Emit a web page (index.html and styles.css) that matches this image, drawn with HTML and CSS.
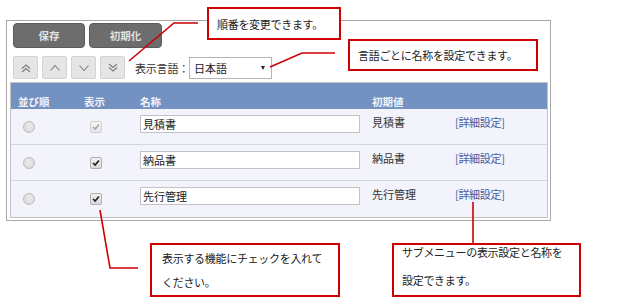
FILE: index.html
```html
<!DOCTYPE html>
<html lang="ja">
<head>
<meta charset="utf-8">
<title>メニュー設定</title>
<link rel="stylesheet" href="styles.css">
</head>
<body>
<div class="stage">
  <section class="panel">
    <div class="toolbar">
      <button class="btn-dark btn-save">保存</button>
      <button class="btn-dark btn-reset">初期化</button>
    </div>
    <div class="toolbar2">
      <div class="arrows">
        <button class="btn-arrow" aria-label="一番上へ"><svg viewBox="0 0 12 12" width="12" height="12"><polyline points="2,6.5 6,3 10,6.5"/><polyline points="2,10 6,6.5 10,10"/></svg></button>
        <button class="btn-arrow" aria-label="上へ"><svg viewBox="0 0 12 12" width="12" height="12"><polyline points="1.5,8.5 6,3.5 10.5,8.5"/></svg></button>
        <button class="btn-arrow" aria-label="下へ"><svg viewBox="0 0 12 12" width="12" height="12"><polyline points="1.5,3.5 6,8.5 10.5,3.5"/></svg></button>
        <button class="btn-arrow" aria-label="一番下へ"><svg viewBox="0 0 12 12" width="12" height="12"><polyline points="2,2 6,5.5 10,2"/><polyline points="2,5.5 6,9 10,5.5"/></svg></button>
      </div>
      <span class="lang-label">表示言語：</span>
      <div class="select"><span>日本語</span><span class="caret" aria-hidden="true"></span></div>
    </div>
    <div class="table">
      <div class="row head">
        <div class="cell">並び順</div>
        <div class="cell">表示</div>
        <div class="cell">名称</div>
        <div class="cell">初期値</div>
        <div class="cell"></div>
      </div>
      <div class="row">
        <div class="cell c-radio"><span class="radio"></span></div>
        <div class="cell c-chk"><span class="chk disabled"><svg viewBox="0 0 12 12" width="10" height="10"><polyline points="2.5,6 5,8.5 9.5,3"/></svg></span></div>
        <div class="cell"><input class="name" type="text" value="見積書"></div>
        <div class="cell text">見積書</div>
        <div class="cell text"><span class="link">[詳細設定]</span></div>
      </div>
      <div class="row">
        <div class="cell c-radio"><span class="radio"></span></div>
        <div class="cell c-chk"><span class="chk"><svg viewBox="0 0 12 12" width="10" height="10"><polyline points="2.5,6 5,8.5 9.5,3"/></svg></span></div>
        <div class="cell"><input class="name" type="text" value="納品書"></div>
        <div class="cell text">納品書</div>
        <div class="cell text"><span class="link">[詳細設定]</span></div>
      </div>
      <div class="row last">
        <div class="cell c-radio"><span class="radio"></span></div>
        <div class="cell c-chk"><span class="chk"><svg viewBox="0 0 12 12" width="10" height="10"><polyline points="2.5,6 5,8.5 9.5,3"/></svg></span></div>
        <div class="cell"><input class="name" type="text" value="先行管理"></div>
        <div class="cell text">先行管理</div>
        <div class="cell text"><span class="link">[詳細設定]</span></div>
      </div>
    </div>
  </section>

  <svg class="leaders" width="640" height="307" viewBox="0 0 640 307">
    <polyline points="129,61 174,23 198,23"/>
    <polyline points="270,67 302,53 335,53"/>
    <polyline points="100,210 110,268 138,268"/>
    <polyline points="473,202 473,243"/>
  </svg>

  <div class="note note-order">順番を変更できます。</div>
  <div class="note note-lang">言語ごとに名称を設定できます。</div>
  <div class="note note-check"><span class="ln">表示する機能にチェックを入れて</span><span class="ln">ください。</span></div>
  <div class="note note-sub"><span class="ln">サブメニューの表示設定と名称を</span><span class="ln">設定できます。</span></div>
</div>
</body>
</html>
```

FILE: styles.css
```css
* { box-sizing: border-box; }
html, body { margin: 0; padding: 0; background: #fff; }
body {
  font-family: "Noto Sans CJK JP", "Noto Sans", sans-serif;
  font-size: 11px;
  color: #222;
}
.stage {
  position: relative;
  width: 640px;
  height: 307px;
  overflow: hidden;
  padding-top: 20px;
  padding-left: 6px;
}
.panel {
  width: 545px;
  height: 201px;
  border: 1px solid #a8a8a8;
  padding: 2px 2px 2px 3px;
  display: flex;
  flex-direction: column;
}
.toolbar {
  display: flex;
  gap: 4px;
  padding-left: 3px;
  height: 25px;
}
.btn-dark {
  height: 25px;
  border: 1px solid #5c5c5c;
  border-radius: 4px;
  background: #6d6d6d;
  color: #e2e2e2;
  font: bold 10.5px "Noto Sans CJK JP", sans-serif;
  padding: 0;
  line-height: 23px;
}
.btn-save { width: 72px; }
.btn-reset { width: 73px; }
.toolbar2 {
  display: flex;
  align-items: center;
  margin-top: 8px;
  height: 23px;
  padding-left: 3px;
}
.arrows { display: flex; gap: 4px; }
.btn-arrow {
  width: 25px;
  height: 23px;
  padding: 0;
  border: 1px solid #d3d3d3;
  border-radius: 2px;
  background: #e5e5e5;
  display: flex;
  align-items: center;
  justify-content: center;
}
.btn-arrow svg polyline {
  fill: none;
  stroke: #7d7d7d;
  stroke-width: 1.1;
}
.lang-label {
  margin-left: 10px;
  font-size: 11px;
  color: #333;
  letter-spacing: -0.2px;
}
.select {
  width: 83px;
  height: 22px;
  border: 1px solid #b4b4b4;
  background: #fff;
  display: flex;
  align-items: center;
  justify-content: space-between;
  padding: 0 6px 0 4px;
  font-size: 11px;
  color: #222;
}
.caret {
  width: 0;
  height: 0;
  border-left: 2.5px solid transparent;
  border-right: 2.5px solid transparent;
  border-top: 4px solid #222;
}
.table {
  margin-top: 3px;
  width: 538px;
  border: 1px solid #c2c2c2;
  background: #f2f3fb;
}
.row {
  display: grid;
  grid-template-columns: 66px 56px 232px 83px 99px;
  height: 36px;
  border-bottom: 1px solid #d4d6df;
}
.row.last { border-bottom: none; }
.row.head {
  height: 26px;
  background: #7391c1;
  border-bottom: none;
}
.head .cell {
  padding-left: 7px;
  line-height: 26px;
  color: #f2f4fa;
  font-weight: bold;
  font-size: 10.5px;
}
.cell { padding-left: 7px; padding-top: 6px; }
.cell.text { line-height: 14px; font-size: 11px; color: #333; }
.c-radio { padding-left: 12px; padding-top: 12px; }
.c-chk { padding-left: 13px; padding-top: 12px; }
.radio {
  display: block;
  width: 12px;
  height: 12px;
  border-radius: 50%;
  border: 1px solid #bcbcbc;
  background: radial-gradient(circle at 50% 40%, #ececec, #d6d6d6);
}
.chk {
  display: flex;
  align-items: center;
  justify-content: center;
  width: 12px;
  height: 12px;
  border: 1px solid #b0b0b0;
  border-radius: 2px;
  background: linear-gradient(#f2f2f2, #d9d9d9);
}
.chk svg polyline {
  fill: none;
  stroke: #222;
  stroke-width: 2;
}
.chk.disabled { border-color: #cfcfcf; background: linear-gradient(#f6f6f6, #e6e6e6); }
.chk.disabled svg polyline { stroke: #a8a8a8; }
.name {
  width: 220px;
  height: 18px;
  border: 1px solid #c2c2c2;
  background: #fff;
  padding: 0 2px;
  margin: 0;
  font: 11px "Noto Sans CJK JP", sans-serif;
  color: #222;
  outline: none;
}
.link { color: #4d5c9e; letter-spacing: -0.3px; }
.leaders {
  position: absolute;
  left: 0;
  top: 0;
  pointer-events: none;
}
.leaders polyline {
  fill: none;
  stroke: #cc0000;
  stroke-width: 1.6;
}
.note {
  position: absolute;
  background: #fff;
  border: 2px solid #d10000;
  font-size: 11px;
  letter-spacing: -0.3px;
  color: #222;
  display: flex;
}
.note-order {
  left: 207px; top: 7px; width: 134px; height: 33px;
  align-items: center; padding-left: 8px;
}
.note-lang {
  left: 348px; top: 39px; width: 190px; height: 32px;
  align-items: center; padding-left: 8px;
}
.note-check {
  left: 150px; top: 243px; width: 190px; height: 54px;
  flex-direction: column; padding: 6px 0 0 10px; gap: 10px;
}
.note-sub {
  left: 392px; top: 243px; width: 189px; height: 54px;
  flex-direction: column; padding: 0 0 0 8px; gap: 14px;
}
.ln { line-height: 14px; display: block; white-space: nowrap; }
```
